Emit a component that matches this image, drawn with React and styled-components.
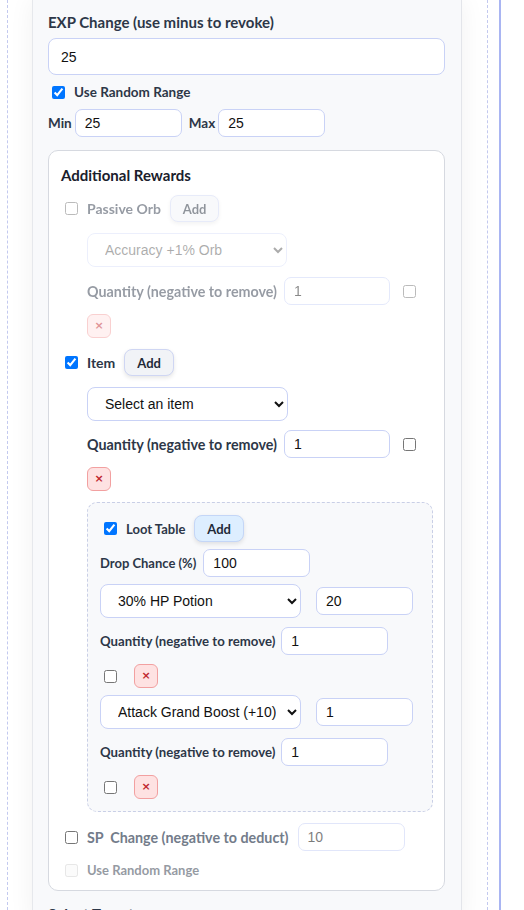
import styled, { createGlobalStyle } from "styled-components";

//#region styled-components
const GlobalStyle = createGlobalStyle`
  html, body {
    margin: 0;
    padding: 0;
    background: #fff;
    font-family: Lato, "Noto Sans", sans-serif;
  }
`;

// whole viewport
const Page = styled.div`
  display: flex;
  height: 910px;
  overflow: hidden;
`;

// dashed column that holds the side panel
const Column = styled.div`
  margin-left: 7px;
  width: 455px;
  padding-left: 24px;
  border-left: 1px dashed #c3c9ef;
  border-right: 1px dashed #c3c9ef;
`;

// blue rail on the right
const Rail = styled.div`
  margin-left: 11px;
  width: 2px;
  background: #a9b5f2;
`;

// scrolled editor panel
const Panel = styled.div`
  width: 430px;
  box-sizing: border-box;
  padding: 12px 16px 0 15px;
  background: #f8f9fb;
  border-left: 1px solid #e6e8ec;
  border-right: 1px solid #e3e5ea;
  box-shadow: 0 0 24px rgba(0, 0, 0, 0.06);
  min-height: 100%;
`;

const FieldLabel = styled.div`
  font-size: 15px;
  font-weight: 700;
  line-height: 20px;
  color: #2d3748;
  margin-top: ${(p) => p.$mt || 0}px;
`;

const TextInput = styled.input`
  box-sizing: border-box;
  width: ${(p) => (p.$w ? `${p.$w}px` : "100%")};
  height: ${(p) => p.$h || 28}px;
  margin: 0 0 0 ${(p) => p.$ml || 0}px;
  padding: 0 0 0 ${(p) => p.$pl || 9}px;
  border: 1px solid #c9d2f6;
  border-radius: ${(p) => (p.$h > 30 ? 8 : 7)}px;
  background: #fff;
  font-family: "Liberation Sans", Arial, sans-serif;
  font-size: 14px;
  color: #111;
  outline: none;
  flex: none;
`;

const Row = styled.div`
  display: flex;
  align-items: center;
  gap: ${(p) => p.$gap ?? 9}px;
  margin-top: ${(p) => p.$mt || 0}px;
  min-height: ${(p) => p.$h || 20}px;
`;

const Check = styled.input.attrs({ type: "checkbox" })`
  width: 13px;
  height: 13px;
  margin: 0 0 0 ${(p) => p.$ml ?? 4}px;
  flex: none;
`;

const SmallLabel = styled.span`
  font-size: ${(p) => p.$size || 13}px;
  font-weight: 700;
  color: ${(p) => p.$color || "#2d3748"};
  white-space: nowrap;
  margin-left: ${(p) => p.$ml || 0}px;
`;

const Card = styled.div`
  margin-top: 13px;
  padding: 14px 12px 10px 12px;
  background: #fff;
  border: 1px solid #d6d9e0;
  border-radius: 10px;
`;

const CardTitle = styled.div`
  font-size: 15px;
  font-weight: 700;
  line-height: 20px;
  color: #1a202c;
  margin-bottom: 10px;
`;

// block of one reward kind
const Reward = styled.div`
  opacity: ${(p) => (p.$off ? 0.5 : 1)};
  margin-top: ${(p) => p.$mt || 0}px;
`;

const Indent = styled.div`
  margin-left: 26px;
  display: flex;
  flex-direction: column;
  align-items: flex-start;
`;

const Select = styled.select`
  box-sizing: border-box;
  width: ${(p) => p.$w || 201}px;
  height: 34px;
  margin-top: ${(p) => p.$mt || 0}px;
  padding: 0 8px 0 13px;
  border: 1px solid #c9d2f6;
  border-radius: 8px;
  background: #fff;
  font-family: "Liberation Sans", Arial, sans-serif;
  font-size: 14px;
  color: #111;
  outline: none;
  flex: none;
`;

const AddButton = styled.button`
  height: 27px;
  padding: 0 12px;
  border: 1px solid ${(p) => (p.$blue ? "#c4d6f7" : "#cfd6f3")};
  border-radius: 8px;
  background: ${(p) => (p.$blue ? "#ddeeff" : "#f1f3f7")};
  box-shadow: 0 2px 4px rgba(0, 0, 0, 0.1);
  font-family: Lato, sans-serif;
  font-size: 13px;
  font-weight: 700;
  color: #1f2937;
  flex: none;
`;

const RemoveButton = styled.button`
  width: 24px;
  height: 24px;
  margin-top: ${(p) => p.$mt || 0}px;
  padding: 0;
  border: 1px solid #f2a0a0;
  border-radius: 6px;
  background: #fee2e2;
  color: #c0262d;
  font-family: "DejaVu Sans", sans-serif;
  font-size: 11px;
  font-weight: 700;
  line-height: 22px;
  flex: none;
`;

const LootBox = styled.div`
  margin-top: 11px;
  width: 346px;
  box-sizing: border-box;
  padding: 12px 12px;
  border: 1px dashed #c9cfe6;
  border-radius: 10px;
  background: #f8f9fb;
`;
//#endregion styled-components

const lootRows = [
  { name: "30% HP Potion", weight: 20 },
  { name: "Attack Grand Boost (+10)", weight: 1 },
];

export default function App() {
  return (
    <>
      <GlobalStyle />
      <Page>
        <Column>
          <Panel>
            <FieldLabel>EXP Change (use minus to revoke)</FieldLabel>
            <div style={{ marginTop: 6 }}>
              <TextInput $h={37} $pl={12} defaultValue="25" />
            </div>
            <Row $mt={7}>
              <Check defaultChecked />
              <SmallLabel $size={13.5}>Use Random Range</SmallLabel>
            </Row>
            <Row $mt={7} $gap={3}>
              <SmallLabel $size={13.5}>Min</SmallLabel>
              <TextInput $w={107} defaultValue="25" />
              <SmallLabel $size={13.5} $ml={4}>Max</SmallLabel>
              <TextInput $w={107} defaultValue="25" />
            </Row>

            <Card>
              <CardTitle>Additional Rewards</CardTitle>

              <Reward $off>
                <Row $h={27}>
                  <Check />
                  <SmallLabel $size={14}>Passive Orb</SmallLabel>
                  <AddButton>Add</AddButton>
                </Row>
                <Indent>
                  <Select $w={200} $mt={11} disabled>
                    <option>Accuracy +1% Orb</option>
                  </Select>
                  <Row $mt={10} $gap={7}>
                    <SmallLabel $size={14.3}>Quantity (negative to remove)</SmallLabel>
                    <TextInput $w={106} defaultValue="1" disabled />
                    <Check $ml={6} />
                  </Row>
                  <RemoveButton $mt={9}>×</RemoveButton>
                </Indent>
              </Reward>

              <Reward $mt={11}>
                <Row $h={27}>
                  <Check defaultChecked />
                  <SmallLabel $size={14}>Item</SmallLabel>
                  <AddButton>Add</AddButton>
                </Row>
                <Indent>
                  <Select $mt={11}>
                    <option>Select an item</option>
                  </Select>
                  <Row $mt={9} $gap={7}>
                    <SmallLabel $size={14.3}>Quantity (negative to remove)</SmallLabel>
                    <TextInput $w={106} defaultValue="1" />
                    <Check $ml={6} />
                  </Row>
                  <RemoveButton $mt={9}>×</RemoveButton>

                  <LootBox>
                    <Row $h={27}>
                      <Check defaultChecked />
                      <SmallLabel>Loot Table</SmallLabel>
                      <AddButton $blue>Add</AddButton>
                    </Row>
                    <Row $mt={7} $gap={7}>
                      <SmallLabel>Drop Chance (%)</SmallLabel>
                      <TextInput $w={107} defaultValue="100" />
                    </Row>
                    {lootRows.map((r) => (
                      <div key={r.name}>
                        <Row $mt={7} $gap={15}>
                          <Select>
                            <option>{r.name}</option>
                          </Select>
                          <TextInput $w={97} defaultValue={r.weight} />
                        </Row>
                        <Row $mt={9} $gap={6}>
                          <SmallLabel $size={13.2}>Quantity (negative to remove)</SmallLabel>
                          <TextInput $w={107} defaultValue="1" />
                        </Row>
                        <Row $mt={9} $gap={17} $h={24}>
                          <Check />
                          <RemoveButton>×</RemoveButton>
                        </Row>
                      </div>
                    ))}
                  </LootBox>
                </Indent>
              </Reward>

              <Row $mt={11} $h={28} $gap={9}>
                <Check />
                <SmallLabel $size={14.3} $color="#737c8a">
                  SP&nbsp;&nbsp;Change (negative to deduct)
                </SmallLabel>
                <TextInput $w={107} defaultValue="10" disabled style={{ opacity: 0.55 }} />
              </Row>
              <Reward $off $mt={9}>
                <Row>
                  <Check disabled />
                  <SmallLabel>Use Random Range</SmallLabel>
                </Row>
              </Reward>
            </Card>

            <FieldLabel $mt={13}>Select Target</FieldLabel>
          </Panel>
        </Column>
        <Rail />
      </Page>
    </>
  );
}
